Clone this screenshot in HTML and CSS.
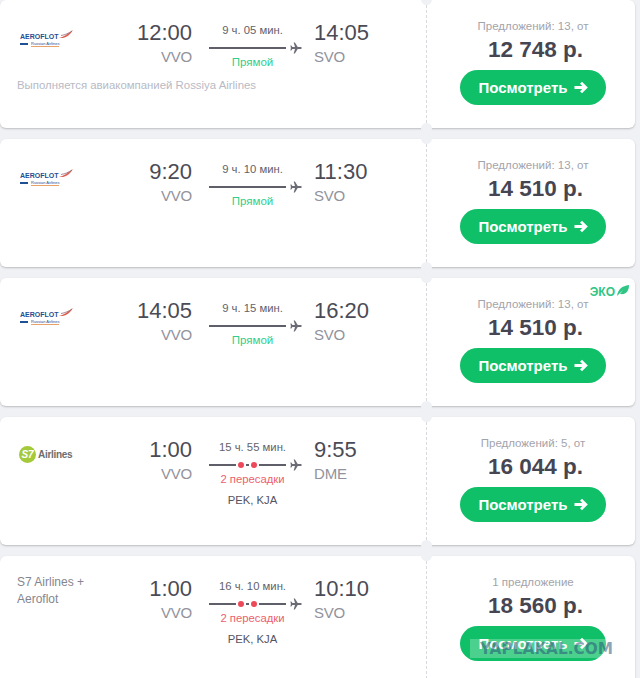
FILE: index.html
```html
<!DOCTYPE html>
<html lang="en">
<head>
    <meta charset="UTF-8">
    <meta name="viewport" content="width=device-width, initial-scale=1.0">
    <title>Flights VVO - Moscow</title>
    <link rel="stylesheet" href="styles.css">
</head>
<body>
  <svg class="defs" width="0" height="0">
    <symbol id="plane" viewBox="0 0 12 12">
      <path d="M11.8 6c0-.6-.9-1-1.8-1H7.7L4.9.4H3.7L5 5H2.4L1.3 3.5H.4L.9 6l-.5 2.5h.9L2.4 7H5l-1.3 4.6h1.2L7.7 7H10c.9 0 1.8-.4 1.8-1z"/>
    </symbol>
    <symbol id="arrow" viewBox="0 0 15 13">
      <path d="M1.500 6.500h11M8 1.800l4.800 4.700L8 11.200" fill="none" stroke="#fff" stroke-width="2.800"/>
    </symbol>
    <symbol id="wing" viewBox="0 0 14 8">
      <path d="M0 8C4 7 9 4 14 0c-2 4-6 7-10 8z" fill="#d9604f"/>
      <path d="M2 5.500C6 5 10 3 13 1" fill="none" stroke="#8a5a70" stroke-width=".7"/>
    </symbol>
  </svg>

  <div class="list">

    <div class="card">
      <div class="route">
        <div class="route-top">
          <div class="airline">
            <div class="logo-aeroflot">
              <div class="aero-name">AEROFLOT<svg class="aero-wing"><use href="#wing"/></svg></div>
              <div class="aero-sub"><span class="aero-mark"></span><span class="aero-ru">Russian Airlines</span></div>
            </div>
          </div>
          <div class="point depart"><div class="time">12:00</div><div class="iata">VVO</div></div>
          <div class="middle">
            <div class="duration">9 ч. 05 мин.</div>
            <div class="track"><span class="line"></span><svg class="plane"><use href="#plane"/></svg></div>
            <div class="direct">Прямой</div>
          </div>
          <div class="point"><div class="time">14:05</div><div class="iata">SVO</div></div>
        </div>
        <div class="note">Выполняется авиакомпанией Rossiya Airlines</div>
      </div>
      <div class="offer">
        <div class="offer-count">Предложений: 13, от</div>
        <div class="price">12 748 р.</div>
        <a class="btn">Посмотреть <svg class="btn-arrow"><use href="#arrow"/></svg></a>
      </div>
    </div>

    <div class="card">
      <div class="route">
        <div class="route-top">
          <div class="airline">
            <div class="logo-aeroflot">
              <div class="aero-name">AEROFLOT<svg class="aero-wing"><use href="#wing"/></svg></div>
              <div class="aero-sub"><span class="aero-mark"></span><span class="aero-ru">Russian Airlines</span></div>
            </div>
          </div>
          <div class="point depart"><div class="time">9:20</div><div class="iata">VVO</div></div>
          <div class="middle">
            <div class="duration">9 ч. 10 мин.</div>
            <div class="track"><span class="line"></span><svg class="plane"><use href="#plane"/></svg></div>
            <div class="direct">Прямой</div>
          </div>
          <div class="point"><div class="time">11:30</div><div class="iata">SVO</div></div>
        </div>
      </div>
      <div class="offer">
        <div class="offer-count">Предложений: 13, от</div>
        <div class="price">14 510 р.</div>
        <a class="btn">Посмотреть <svg class="btn-arrow"><use href="#arrow"/></svg></a>
      </div>
    </div>

    <div class="card">
      <div class="route">
        <div class="route-top">
          <div class="airline">
            <div class="logo-aeroflot">
              <div class="aero-name">AEROFLOT<svg class="aero-wing"><use href="#wing"/></svg></div>
              <div class="aero-sub"><span class="aero-mark"></span><span class="aero-ru">Russian Airlines</span></div>
            </div>
          </div>
          <div class="point depart"><div class="time">14:05</div><div class="iata">VVO</div></div>
          <div class="middle">
            <div class="duration">9 ч. 15 мин.</div>
            <div class="track"><span class="line"></span><svg class="plane"><use href="#plane"/></svg></div>
            <div class="direct">Прямой</div>
          </div>
          <div class="point"><div class="time">16:20</div><div class="iata">SVO</div></div>
        </div>
      </div>
      <div class="offer">
        <div class="eco">ЭКО<svg class="leaf" viewBox="0 0 12 11"><path d="M0 11C1 4 5 1 12 0c0 6-3 10-9 9L6 5z"/></svg></div>
        <div class="offer-count">Предложений: 13, от</div>
        <div class="price">14 510 р.</div>
        <a class="btn">Посмотреть <svg class="btn-arrow"><use href="#arrow"/></svg></a>
      </div>
    </div>

    <div class="card">
      <div class="route">
        <div class="route-top">
          <div class="airline">
            <div class="logo-s7"><span class="s7-mark">S7</span><span class="s7-name">Airlines</span></div>
          </div>
          <div class="point depart"><div class="time">1:00</div><div class="iata">VVO</div></div>
          <div class="middle">
            <div class="duration">15 ч. 55 мин.</div>
            <div class="track"><span class="line"></span><span class="stop"></span><span class="dash"></span><span class="stop"></span><span class="line"></span><svg class="plane"><use href="#plane"/></svg></div>
            <div class="stops">2 пересадки</div>
            <div class="codes">PEK, KJA</div>
          </div>
          <div class="point"><div class="time">9:55</div><div class="iata">DME</div></div>
        </div>
      </div>
      <div class="offer">
        <div class="offer-count">Предложений: 5, от</div>
        <div class="price">16 044 р.</div>
        <a class="btn">Посмотреть <svg class="btn-arrow"><use href="#arrow"/></svg></a>
      </div>
    </div>

    <div class="card">
      <div class="route">
        <div class="route-top">
          <div class="airline airline-text">S7 Airlines + Aeroflot</div>
          <div class="point depart"><div class="time">1:00</div><div class="iata">VVO</div></div>
          <div class="middle">
            <div class="duration">16 ч. 10 мин.</div>
            <div class="track"><span class="line"></span><span class="stop"></span><span class="dash"></span><span class="stop"></span><span class="line"></span><svg class="plane"><use href="#plane"/></svg></div>
            <div class="stops">2 пересадки</div>
            <div class="codes">PEK, KJA</div>
          </div>
          <div class="point"><div class="time">10:10</div><div class="iata">SVO</div></div>
        </div>
      </div>
      <div class="offer">
        <div class="offer-count">1 предложение</div>
        <div class="price">18 560 р.</div>
        <a class="btn">Посмотреть <svg class="btn-arrow"><use href="#arrow"/></svg></a>
      </div>
    </div>

  </div>

  <div class="watermark">YAPLAKAL.COM</div>
</body>
</html>
```

FILE: styles.css
```css
html, body {
  height: 678px;
  margin: 0;
  overflow: hidden;
  font-family: 'Liberation Sans', Arial, sans-serif;
  background-color: #f0f1f4;
}
.defs {
  position: absolute;
}
.list {
  width: 635px;
}
.card {
  display: flex;
  position: relative;
  height: 128px;
  margin-bottom: 11px;
  background-color: #fff;
  border-radius: 6px;
  box-shadow: 0 1px 2px rgba(0,0,0,0.22);
}

/* left part of the ticket */
.route {
  width: 426px;
  flex-shrink: 0;
  box-sizing: border-box;
  padding: 20px 0 0 17px;
}
.route-top {
  display: flex;
}
.airline {
  width: 105px;
  flex-shrink: 0;
}
.airline-text {
  margin-top: -2px;
  font-size: 12px;
  line-height: 17px;
  color: #85858f;
  box-sizing: border-box;
  padding-right: 35px;
}
.point {
  width: 70px;
  flex-shrink: 0;
}
.depart {
  text-align: right;
  margin-right: 17px;
}
.time {
  font-size: 22px;
  line-height: 26px;
  color: #4b4b55;
}
.iata {
  font-size: 15px;
  line-height: 22px;
  letter-spacing: -0.2px;
  color: #92929c;
}
.middle {
  width: 87px;
  margin-right: 18px;
  padding-top: 1px;
  text-align: center;
}
.duration {
  font-size: 11.300px;
  line-height: 18px;
  color: #62626c;
}
.track {
  display: flex;
  align-items: center;
  gap: 2px;
  width: 93px;
  height: 12px;
  margin-top: 3px;
}
.line {
  flex: 1;
  height: 2px;
  background-color: #5f5f69;
}
.stop {
  width: 6px;
  height: 6px;
  border-radius: 50%;
  background-color: #ec4a5b;
}
.dash {
  width: 3px;
  height: 2px;
  background-color: #5f5f69;
}
.plane {
  width: 12px;
  height: 12px;
  margin-left: 2px;
  fill: #6b6b75;
}
.direct {
  font-size: 11.500px;
  line-height: 16px;
  color: #2fce8c;
}
.stops {
  font-size: 11.300px;
  line-height: 16px;
  color: #ec5f6e;
}
.codes {
  margin-top: 5px;
  font-size: 11.300px;
  line-height: 16px;
  color: #55555f;
}
.note {
  margin-top: 7px;
  font-size: 11.400px;
  line-height: 16px;
  color: #b7bac5;
}

/* airline logos */
.logo-aeroflot {
  width: 54px;
  margin: 13px 0 0 3px;
}
.aero-name {
  display: flex;
  align-items: flex-start;
  font-size: 7px;
  line-height: 7px;
  font-weight: bold;
  color: #1f4f94;
}
.aero-wing {
  width: 14px;
  height: 8px;
  margin-top: -3px;
}
.aero-sub {
  display: flex;
  align-items: center;
  margin-top: 1px;
}
.aero-mark {
  width: 8px;
  height: 2px;
  margin-right: 3px;
  background-color: #1f4f94;
}
.aero-ru {
  font-size: 4px;
  line-height: 5px;
  color: #1f4f94;
  border-bottom: 1px solid #e8a36a;
}
.logo-s7 {
  display: flex;
  align-items: center;
  gap: 2px;
  margin: 9px 0 0 2px;
}
.s7-mark {
  display: flex;
  align-items: center;
  justify-content: center;
  width: 17px;
  height: 17px;
  border-radius: 50%;
  background-color: #a4c93a;
  color: #fff;
  font-size: 10px;
  font-weight: bold;
  font-style: italic;
}
.s7-name {
  font-size: 10px;
  font-weight: bold;
  letter-spacing: -0.3px;
  color: #6d6d6d;
}

/* right part of the ticket */
.offer {
  flex: 1;
  position: relative;
  display: flex;
  flex-direction: column;
  align-items: center;
  border-left: 1px dashed #d8d9de;
  padding: 18px 0 0 4px;
}
.offer::before, .offer::after {
  content: "";
  position: absolute;
  left: -6px;
  width: 11px;
  height: 11px;
  border-radius: 50%;
  background-color: #f0f1f4;
}
.offer::before {
  top: -6px;
}
.offer::after {
  bottom: -6px;
}
.offer-count {
  font-size: 11.500px;
  line-height: 16px;
  color: #a3a3ab;
}
.price {
  margin: 3px 0 0 5px;
  font-size: 22.500px;
  line-height: 26px;
  font-weight: bold;
  color: #464653;
}
.btn {
  display: flex;
  align-items: center;
  justify-content: center;
  gap: 5px;
  width: 146px;
  height: 35px;
  margin-top: 7px;
  border-radius: 18px;
  background-color: #10c069;
  color: #fff;
  font-size: 15px;
  font-weight: bold;
  cursor: pointer;
}
.btn-arrow {
  width: 15px;
  height: 13px;
}
.eco {
  position: absolute;
  top: 8px;
  right: 6px;
  display: flex;
  align-items: center;
  gap: 2px;
  font-size: 12px;
  line-height: 13px;
  font-weight: bold;
  color: #2fc585;
}
.leaf {
  width: 12px;
  height: 11px;
  margin-top: -4px;
  fill: #2fc585;
}
.watermark {
  position: absolute;
  left: 470px;
  top: 639px;
  width: 144px;
  height: 19px;
  padding-left: 10px;
  box-sizing: border-box;
  background-color: rgba(255,255,255,0.25);
  color: rgba(40,85,120,0.55);
  font-family: 'DejaVu Sans', sans-serif;
  font-size: 15.300px;
  line-height: 20px;
  font-weight: bold;
  white-space: nowrap;
}
```
